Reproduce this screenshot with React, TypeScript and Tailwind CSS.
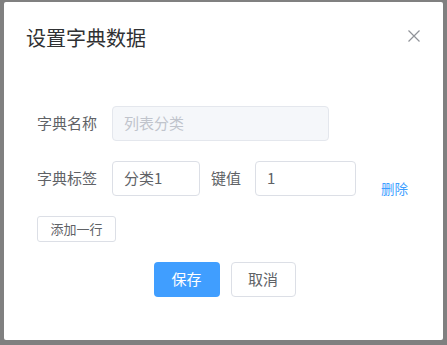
import React from "react";

export default function App() {
  const font = { fontFamily: '"Noto Sans CJK SC", "Noto Sans", sans-serif' };
  return (
    <div className="w-[447px] h-[345px] bg-[#808080] pt-[2px] pl-[4px] overflow-hidden" style={font}>
      <div className="w-[439px] h-[338px] bg-white rounded-[2px] flex flex-col">
        <div className="flex items-center justify-between pl-[22px] pr-[23px] pt-[24px]">
          <span className="text-[20px] leading-[24px] text-[#303133]">设置字典数据</span>
          <svg width="12" height="12" viewBox="0 0 12 12" className="mt-[-4px]">
            <path d="M0.5 0.5 L11.5 11.5 M11.5 0.5 L0.5 11.5" stroke="#909399" strokeWidth="1.2" fill="none" />
          </svg>
        </div>
        <div className="flex flex-col pl-[33px] mt-[56px]">
          <div className="flex items-center h-[35px]">
            <span className="w-[75px] text-[15px] text-[#606266]">字典名称</span>
            <div className="w-[217px] h-[35px] rounded-[4px] border border-[#e4e7ed] bg-[#f5f7fa] flex items-center px-[11px] text-[15px] text-[#c0c4cc]">
              列表分类
            </div>
          </div>
          <div className="flex items-center h-[35px] mt-[20px]">
            <span className="w-[75px] text-[15px] text-[#606266]">字典标签</span>
            <div className="w-[88px] h-[35px] rounded-[4px] border border-[#dcdfe6] bg-white flex items-center px-[11px] text-[15px] text-[#606266]">
              分类1
            </div>
            <span className="ml-[11px] w-[44px] text-[15px] text-[#606266]">键值</span>
            <div className="w-[101px] h-[35px] rounded-[4px] border border-[#dcdfe6] bg-white flex items-center px-[11px] text-[15px] text-[#606266]">
              1
            </div>
            <span className="ml-[25px] mt-[19px] text-[13.5px] text-[#409eff]">删除</span>
          </div>
          <div className="mt-[20px] flex">
            <div className="w-[79px] h-[26px] rounded-[3px] border border-[#dcdfe6] flex items-center justify-center text-[13px] text-[#606266]">
              添加一行
            </div>
          </div>
        </div>
        <div className="flex justify-center gap-[11px] mt-[20px] pl-[2px]">
          <div className="w-[66px] h-[35px] rounded-[4px] bg-[#409eff] flex items-center justify-center text-[15px] text-white">
            保存
          </div>
          <div className="w-[65px] h-[35px] rounded-[4px] border border-[#dcdfe6] bg-white flex items-center justify-center text-[15px] text-[#606266]">
            取消
          </div>
        </div>
      </div>
    </div>
  );
}
